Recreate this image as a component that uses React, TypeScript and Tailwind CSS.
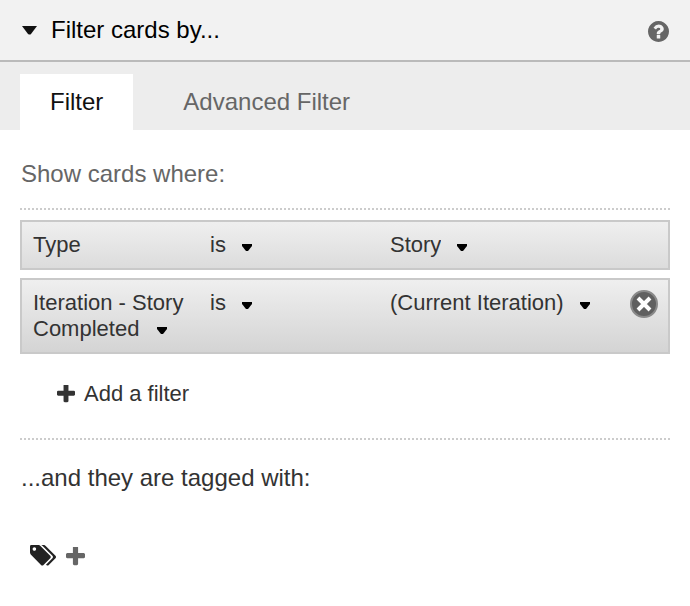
import { useState } from "react";

const ICONS = {
  help: {
    box: "128 128 1536 1536",
    d: "M1024 1376v-192q0-14-9-23t-23-9h-192q-14 0-23 9t-9 23v192q0 14 9 23t23 9h192q14 0 23-9t9-23zm256-672q0-88-55.5-163t-138.5-116-170-41q-243 0-371 213-15 24 8 42l132 100q7 6 19 6 16 0 25-12 53-68 86-92 34-24 86-24 48 0 85.5 26t37.5 59q0 38-20 61t-68 45q-63 28-115.5 86.5t-52.5 125.5v36q0 14 9 23t23 9h192q14 0 23-9t9-23q0-19 21.5-49.5t54.5-49.5q32-18 49-28.5t46-35 44.5-48 28-60.5 12.5-81zm384 192q0 209-103 385.5t-279.5 279.5-385.5 103-385.5-103-279.5-279.5-103-385.5 103-385.5 279.5-279.5 385.5-103 385.5 103 279.5 279.5 103 385.5z",
  },
  plus: {
    box: "192 192 1408 1408",
    d: "M1600 736v192q0 40-28 68t-68 28h-416v416q0 40-28 68t-68 28h-192q-40 0-68-28t-28-68v-416h-416q-40 0-68-28t-28-68v-192q0-40 28-68t68-28h416v-416q0-40 28-68t68-28h192q40 0 68 28t28 68v416h416q40 0 68 28t28 68z",
  },
  tags: {
    box: "0 192 1899 1451",
    d: "M448 448q0-53-37.5-90.5t-90.5-37.5-90.5 37.5-37.5 90.5 37.5 90.5 90.5 37.5 90.5-37.5 37.5-90.5zm1067 576q0 53-37 90l-491 492q-39 37-91 37-53 0-90-37l-715-716q-38-37-64.5-101t-26.5-117v-416q0-52 38-90t90-38h416q53 0 117 26.5t102 64.5l715 714q37 39 37 91zm384 0q0 53-37 90l-491 492q-39 37-91 37-36 0-59-14t-53-45l470-470q37-37 37-90 0-52-37-91l-715-714q-38-38-102-64.5t-117-26.5h224q53 0 117 26.5t102 64.5l715 714q37 39 37 91z",
  },
};

function Icon({ name, className }: { name: keyof typeof ICONS; className: string }) {
  return (
    <svg viewBox={ICONS[name].box} className={className} fill="currentColor" aria-hidden="true">
      <path d={ICONS[name].d} />
    </svg>
  );
}

function Caret({ className }: { className: string }) {
  return (
    <svg viewBox="0 0 10 7" className={className} aria-hidden="true">
      <path d="M0 0h10v2L6 7H4L0 2z" fill="#000" />
    </svg>
  );
}

function Picker({ label, options }: { label: string; options: string[] }) {
  return (
    <span className="inline-grid items-center justify-self-start">
      <select
        aria-label={label}
        className="col-start-1 row-start-1 field-sizing-content cursor-pointer appearance-none bg-transparent pr-[26px]"
      >
        {options.map((option) => (
          <option key={option}>{option}</option>
        ))}
      </select>
      <Caret className="pointer-events-none col-start-1 row-start-1 mt-1 h-[7px] w-[10px] justify-self-end" />
    </span>
  );
}

function Divider() {
  return (
    <hr className="h-[2px] border-0 bg-[repeating-linear-gradient(90deg,#ccc_0_2px,transparent_2px_4px)]" />
  );
}

const ROW =
  "grid grid-cols-[177px_180px_1fr_auto] items-start border-2 border-[#c9c9c9] bg-linear-to-b from-[#efefef] py-[10px] pl-[11px] pr-[10px] text-[22px] leading-[26px] text-[#333]";

export default function App() {
  const [open, setOpen] = useState(true);
  const [tab, setTab] = useState("filter");

  return (
    <main className="bg-white font-['Liberation_Sans',Arial,sans-serif] text-[24px] leading-[28px] text-[#333]">
      <header className="flex items-center justify-between border-b-2 border-[#bababa] bg-[#f2f2f2] px-5 py-4">
        <button
          type="button"
          aria-expanded={open}
          onClick={() => setOpen(!open)}
          className="flex cursor-pointer items-center gap-[14px] pl-[2px] text-black"
        >
          <svg viewBox="0 0 15 9" className="h-[9px] w-[15px]" aria-hidden="true">
            <path d="M0 0h15L9 8q-1 1-3 0z" fill="#111" />
          </svg>
          Filter cards by...
        </button>
        <button type="button" aria-label="Help" className="cursor-pointer pt-[2px] pr-px text-[#666]">
          <Icon name="help" className="size-[21px]" />
        </button>
      </header>

      {open && (
        <>
          <div role="tablist" className="flex bg-[#ededed] px-5 pt-3">
            <button
              type="button"
              role="tab"
              aria-selected={tab === "filter"}
              onClick={() => setTab("filter")}
              className="cursor-pointer bg-white px-[30px] py-[14px] text-[#111]"
            >
              Filter
            </button>
            <button
              type="button"
              role="tab"
              aria-selected={tab === "advanced"}
              onClick={() => setTab("advanced")}
              className="ml-5 cursor-pointer px-[30px] py-[14px] text-[#666]"
            >
              Advanced Filter
            </button>
          </div>

          <section className="px-5 pt-[30px]">
            <h2 className="mb-5 pl-px text-[#666]">Show cards where:</h2>
            <Divider />

            <div className="mt-[10px] flex flex-col gap-2">
              <div className={`${ROW} to-[#dcdcdc]`}>
                <span>Type</span>
                <Picker label="Type operator" options={["is", "is not"]} />
                <Picker label="Type value" options={["Story", "Bug", "Task"]} />
              </div>
              <div className={`${ROW} to-[#d4d4d4]`}>
                <button type="button" aria-haspopup="listbox" className="cursor-pointer text-left">
                  Iteration - Story Completed
                  <Caret className="ml-[18px] inline h-[7px] w-[10px]" />
                </button>
                <Picker label="Iteration operator" options={["is", "is not"]} />
                <Picker label="Iteration value" options={["(Current Iteration)", "(not set)"]} />
                <button type="button" aria-label="Remove filter" className="cursor-pointer">
                  <svg viewBox="0 0 28 28" className="size-7" aria-hidden="true">
                    <circle cx="14" cy="14" r="13" fill="#606060" stroke="#8a8a8a" strokeWidth="2" />
                    <path d="M8 8l12 12M20 8L8 20" stroke="#fff" strokeWidth="4" />
                  </svg>
                </button>
              </div>
            </div>

            <button
              type="button"
              className="mt-[26px] mb-[30px] ml-[37px] flex cursor-pointer items-center gap-[9px] text-[22px]"
            >
              <Icon name="plus" className="size-[18px]" />
              Add a filter
            </button>
            <Divider />

            <h2 className="mt-6 pl-px">...and they are tagged with:</h2>
            <div className="mt-[53px] flex items-end gap-[10px] pl-[10px]">
              <Icon name="tags" className="h-[21px] w-[26px] text-[#222]" />
              <button type="button" aria-label="Add a tag" className="cursor-pointer text-[#666]">
                <Icon name="plus" className="size-[19px]" />
              </button>
            </div>
          </section>
        </>
      )}
    </main>
  );
}
